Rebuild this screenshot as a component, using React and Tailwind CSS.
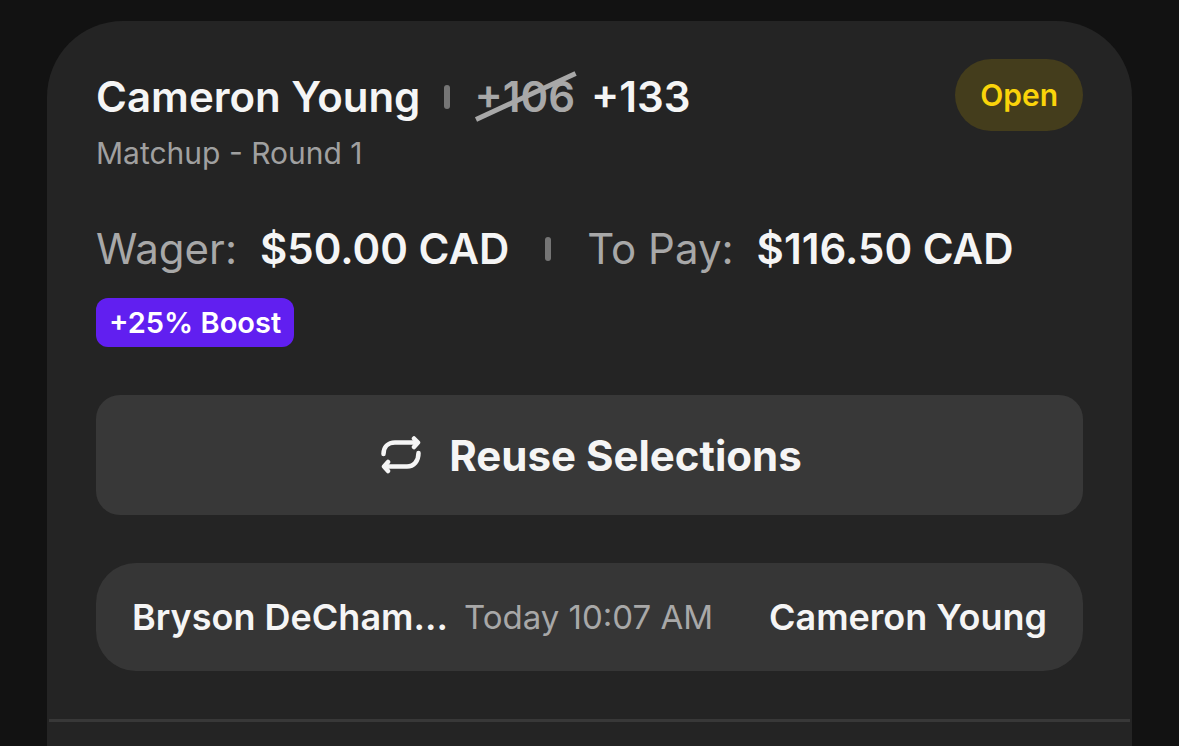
const bet = {
  selection: "Cameron Young",
  market: "Matchup - Round 1",
  oldOdds: "+106",
  odds: "+133",
  status: "Open",
  wager: "$50.00 CAD",
  toPay: "$116.50 CAD",
  boost: "+25% Boost",
  home: "Bryson DeCham...",
  away: "Cameron Young",
  startsAt: "Today 10:07 AM",
};

function Separator() {
  return <span className="block h-6 w-1.5 shrink-0 rounded-full bg-[#757575]" />;
}

function ReuseIcon() {
  return (
    <svg
      className="h-10 w-10"
      viewBox="0 0 40 40"
      fill="none"
      stroke="currentColor"
      strokeWidth="4.500"
      strokeLinecap="round"
      strokeLinejoin="round"
      aria-hidden="true"
    >
      <path d="M2.500 19C2.500 12 7 7.500 14 7.500H36" />
      <path d="M33 3.500L37 7.500L33 12" fill="currentColor" />
      <path d="M37.500 18C37.500 26 33 31.500 26 31.500H4" />
      <path d="M7 27L3 31.500L7 36" fill="currentColor" />
    </svg>
  );
}

function BetHeader() {
  return (
    <header className="flex items-start justify-between">
      <div className="pt-3">
        <div className="flex items-center text-[42px] leading-[52px] font-semibold">
          <h1>{bet.selection}</h1>
          <div className="px-6">
            <Separator />
          </div>
          {/* old odds, crossed out */}
          <s className="relative text-[#a8a8a8] no-underline">
            {bet.oldOdds}
            <svg
              className="absolute inset-0 h-full w-full overflow-visible"
              viewBox="0 0 100 52"
              preserveAspectRatio="none"
              stroke="currentColor"
              strokeWidth="5"
              aria-hidden="true"
            >
              <path d="M2 48.500L101 2.500" />
            </svg>
          </s>
          <span className="ml-4">{bet.odds}</span>
        </div>
        <p className="mt-3 text-[30px] leading-9 text-[#a0a0a0]">{bet.market}</p>
      </div>

      <span className="rounded-full bg-[#443d1c] px-[25px] text-[30px] leading-[72px] font-semibold text-[#fad40a]">
        {bet.status}
      </span>
    </header>
  );
}

function Amounts() {
  return (
    <dl className="mt-[52px] flex items-center text-[42px] leading-[52px]">
      <dt className="text-[#a8a8a8]">Wager:</dt>
      <dd className="ml-[23px] font-semibold">{bet.wager}</dd>
      <div className="px-9">
        <Separator />
      </div>
      <dt className="text-[#a8a8a8]">To Pay:</dt>
      <dd className="ml-[23px] font-semibold">{bet.toPay}</dd>
    </dl>
  );
}

export default function App() {
  return (
    <main className="flex h-screen flex-col overflow-hidden bg-[#121212] px-[47px] pt-[21px] font-[Inter,sans-serif] text-[#f5f5f5]">
      <article className="flex-1 rounded-t-[76px] bg-[#242424] pt-[38px]">
        <div className="px-[49px]">
          <BetHeader />
          <Amounts />

          <div className="mt-[23px] flex">
            <span className="rounded-xl bg-[#611ff0] px-[13px] text-[29px] leading-[49px] font-semibold text-white">
              {bet.boost}
            </span>
          </div>

          <button
            type="button"
            className="mt-12 flex h-[120px] w-full items-center justify-center gap-7 rounded-3xl bg-[#383838] pl-1 text-[42px] font-bold"
          >
            <ReuseIcon />
            Reuse Selections
          </button>

          <div className="mt-12 flex h-[108px] items-center rounded-[40px] bg-[#363636] px-9 text-4xl font-semibold">
            <span>{bet.home}</span>
            <time className="ml-4 text-[33px] font-normal text-[#a8a8a8]">{bet.startsAt}</time>
            <span className="ml-auto">{bet.away}</span>
          </div>
        </div>

        <hr className="mx-0.5 mt-12 border-t-3 border-[#383838]" />
      </article>
    </main>
  );
}
